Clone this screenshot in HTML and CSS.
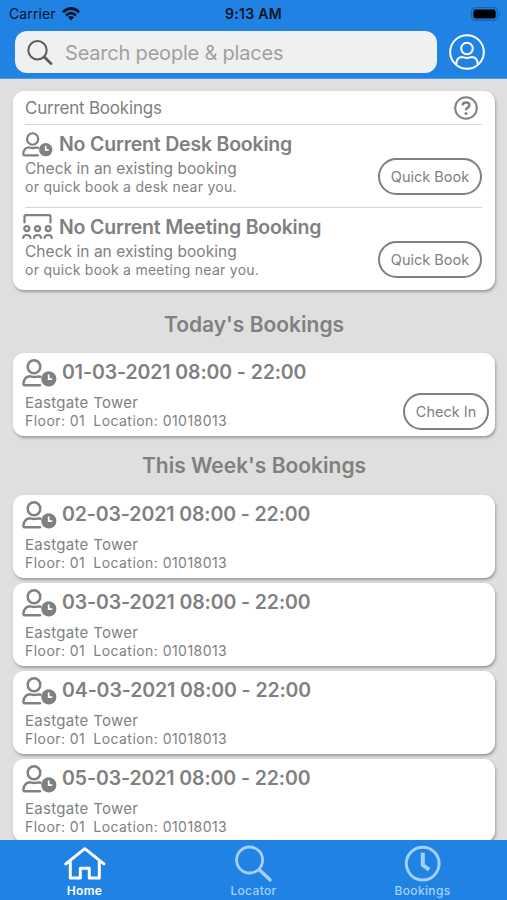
FILE: index.html
```html
<!DOCTYPE html>
<html lang="en">
<head>
<meta charset="utf-8">
<title>Bookings</title>
<link rel="stylesheet" href="styles.css">
</head>
<body>
<svg class="defs" width="0" height="0" aria-hidden="true">
  <symbol id="desk" viewBox="0 0 35 28">
    <g fill="none" stroke="currentColor" stroke-width="2.5" stroke-linecap="round" stroke-linejoin="round">
      <ellipse cx="12" cy="7.8" rx="6.3" ry="6.5"/>
      <path d="M18 26.2H2.5Q1.2 26.2 1.5 24Q2.3 18.2 6.8 17.4Q8.2 17.2 9.5 17.6Q12.3 18.4 15.2 17.6Q16.8 17.2 18.2 17.7"/>
    </g>
    <circle cx="26.8" cy="19.8" r="7.6" fill="currentColor"/>
    <path d="M26.7 15.5V20.1H30.2" fill="none" stroke="#fff" stroke-width="1.8"/>
  </symbol>
  <symbol id="meeting" viewBox="0 0 31 25">
    <g fill="none" stroke="currentColor" stroke-width="2.2" stroke-linecap="round" stroke-linejoin="round">
      <path d="M2.5 8.5V2.7Q2.5 1.2 4 1.2H27Q28.5 1.2 28.5 2.7V8.5"/>
      <circle cx="4.8" cy="14.6" r="2.5"/><circle cx="15.5" cy="14.6" r="2.5"/><circle cx="26.2" cy="14.6" r="2.5"/>
      <path d="M1.2 23.9Q1.4 21 4.8 21Q8.2 21 8.5 23.9M11.9 23.9Q12.2 21 15.5 21Q18.8 21 19.1 23.9M22.5 23.9Q22.8 21 26.2 21Q29.6 21 29.8 23.9"/>
    </g>
  </symbol>
</svg>
<div class="app">
  <header class="header">
    <div class="status">
      <div class="carrier"><span>Carrier</span>
        <svg width="18" height="14" viewBox="0 0 18 14"><g fill="none" stroke="#051426" stroke-width="2.7"><path d="M.9 5.2Q9-2.2 17.1 5.2M4 8.4Q9 4 14 8.4"/></g><path d="M5.9 10.3Q9 7.9 12.1 10.3L9 13.6Z" fill="#051426"/></svg>
      </div>
      <span class="time">9:13 AM</span>
      <svg class="battery" width="31" height="14" viewBox="0 0 31 14"><rect x=".6" y=".6" width="25.8" height="12.8" rx="4" fill="none" stroke="#1764ae" stroke-width="1.2"/><rect x="2.4" y="2.4" width="22.2" height="9.2" rx="2.3" fill="#000"/><path d="M28 4.7Q30 7 28 9.3Z" fill="#1764ae"/></svg>
    </div>
    <div class="search-row">
      <div class="search">
        <svg width="26" height="26" viewBox="0 0 26 26" fill="none" stroke="#5c5c5c"><circle cx="10.5" cy="10.3" r="9.2" stroke-width="2"/><path d="M17.2 17L24 23.5" stroke-width="2.8" stroke-linecap="round"/></svg>
        <span>Search people &amp; places</span>
      </div>
      <svg class="profile" width="36" height="36" viewBox="0 0 36 36" fill="none" stroke="#fff" stroke-width="2"><circle cx="18" cy="18" r="16.8"/><circle cx="18" cy="14.5" r="5.8"/><path d="M7.2 30.3Q7.5 23.3 12.8 22.9Q14 22.9 15.2 23.4Q18 24.4 20.8 23.4Q22 22.9 23.2 22.9Q28.5 23.3 28.8 30.3"/></svg>
    </div>
  </header>
  <main class="content">
    <section class="card current">
      <div class="current-head"><span>Current Bookings</span>
        <svg width="24" height="24" viewBox="0 0 24 24" fill="none" stroke="currentColor"><circle cx="12" cy="12" r="10.8" stroke-width="2"/><path d="M8.6 9.4Q8.7 6.5 12 6.5Q15.4 6.5 15.4 9.2Q15.4 10.8 13.7 11.7Q12 12.6 12 14.3" stroke-width="2.5"/><circle cx="12" cy="17.4" r="1.5" fill="currentColor" stroke="none"/></svg>
      </div>
      <div class="slot">
        <div class="slot-title"><svg class="icon-desk"><use href="#desk"/></svg><h3 class="t-desk">No Current Desk Booking</h3></div>
        <div class="slot-body"><div><p class="line-a">Check in an existing booking</p><p class="line-b">or quick book a desk near you.</p></div><button>Quick Book</button></div>
      </div>
      <div class="slot">
        <div class="slot-title"><svg class="icon-meeting"><use href="#meeting"/></svg><h3>No Current Meeting Booking</h3></div>
        <div class="slot-body"><div><p class="line-a">Check in an existing booking</p><p class="line-b">or quick book a meeting near you.</p></div><button>Quick Book</button></div>
      </div>
    </section>
    <h2 class="today">Today's Bookings</h2>
    <article class="card booking">
      <div class="booking-title"><svg><use href="#desk"/></svg><h3>01-03-2021 08:00 - 22:00</h3></div>
      <div class="booking-body"><div><p class="place">Eastgate Tower</p><p class="where"><span>Floor: 01</span><span>Location: 01018013</span></p></div><button class="check">Check In</button></div>
    </article>
    <h2 class="week">This Week's Bookings</h2>
    <div class="list">
      <article class="card booking">
        <div class="booking-title"><svg><use href="#desk"/></svg><h3>02-03-2021 08:00 - 22:00</h3></div>
        <div class="booking-body"><div><p class="place">Eastgate Tower</p><p class="where"><span>Floor: 01</span><span>Location: 01018013</span></p></div></div>
      </article>
      <article class="card booking">
        <div class="booking-title"><svg><use href="#desk"/></svg><h3>03-03-2021 08:00 - 22:00</h3></div>
        <div class="booking-body"><div><p class="place">Eastgate Tower</p><p class="where"><span>Floor: 01</span><span>Location: 01018013</span></p></div></div>
      </article>
      <article class="card booking">
        <div class="booking-title"><svg><use href="#desk"/></svg><h3>04-03-2021 08:00 - 22:00</h3></div>
        <div class="booking-body"><div><p class="place">Eastgate Tower</p><p class="where"><span>Floor: 01</span><span>Location: 01018013</span></p></div></div>
      </article>
      <article class="card booking">
        <div class="booking-title"><svg><use href="#desk"/></svg><h3>05-03-2021 08:00 - 22:00</h3></div>
        <div class="booking-body"><div><p class="place">Eastgate Tower</p><p class="where"><span>Floor: 01</span><span>Location: 01018013</span></p></div></div>
      </article>
    </div>
  </main>
  <nav class="tabs">
    <div class="tab active">
      <svg width="42" height="38" viewBox="0 0 42 38" fill="none" stroke="currentColor" stroke-width="3" stroke-linejoin="round" stroke-linecap="round"><path d="M1.8 18.8L20.8 3.7L39.8 18.8M6.3 17V33H16.3V23.3H25.3V33H35.3V17"/></svg>
      <span>Home</span>
    </div>
    <div class="tab">
      <svg width="42" height="38" viewBox="0 0 42 38" fill="none" stroke="currentColor" stroke-linecap="round"><circle cx="16.6" cy="15" r="13" stroke-width="2.8"/><path d="M26.5 25L37 34.8" stroke-width="3.5"/></svg>
      <span>Locator</span>
    </div>
    <div class="tab">
      <svg width="42" height="38" viewBox="0 0 42 38" fill="none" stroke="currentColor"><circle cx="20.7" cy="18.6" r="16.4" stroke-width="3"/><path d="M20.8 7.7V20L27.2 24.7" stroke-width="4"/></svg>
      <span>Bookings</span>
    </div>
  </nav>
</div>
</body>
</html>
```
FILE: styles.css
```css
* { box-sizing: border-box; }
body { margin: 0; font-family: Inter, sans-serif; color: #808080; }
h2, h3, p { margin: 0; white-space: nowrap; }
svg { display: block; flex: none; }
.defs { position: absolute; }
.app { height: 900px; display: flex; flex-direction: column; overflow: hidden; background: #dfdfdf; }
.header { height: 79px; flex: none; background: #2083e4; border-bottom: 1px solid #4e9be7; }
.status { height: 31px; display: grid; grid-template-columns: 1fr auto 1fr; align-items: center; padding: 0 5px 4px 9px; color: #051426; }
.carrier { display: flex; align-items: center; gap: 6px; font-size: 14px; letter-spacing: .1px; }
.time { font-size: 14px; font-weight: 600; letter-spacing: .3px; margin-right: 4px; }
.battery { justify-self: end; }
.search-row { display: flex; align-items: center; padding: 0 22px 0 15px; justify-content: space-between; }
.search { width: 422px; height: 42px; border-radius: 12px; background: #f0f0f0; display: flex; align-items: center; gap: 12px; padding: 1px 0 0 12px; font-size: 20px; letter-spacing: -.2px; color: #a0a0a0; }
.content { flex: 1; min-height: 0; overflow: hidden; padding: 12px 12px 0 13px; }
.card { background: #fff; border-radius: 11px; box-shadow: 1px 2px 3px rgba(0,0,0,.3); }
.current { height: 199px; padding: 0 13px 0 12px; }
.current-head { height: 34px; display: flex; align-items: center; justify-content: space-between; padding: 0 4px 0 0; font-size: 17px; letter-spacing: -.2px; border-bottom: 1px solid #d4d4d4; }
.slot { height: 82px; }
.slot + .slot { border-top: 1px solid #d4d4d4; }
.slot-title { height: 34px; display: flex; align-items: center; margin-left: -3px; }
h3 { font-size: 19.5px; font-weight: 600; line-height: 24px; letter-spacing: -.2px; }
.slot-title h3 { padding-top: 3px; }
.icon-desk { width: 31px; height: 25px; margin: 4px 6px 0 0; }
.icon-meeting { width: 31px; height: 25px; margin: 3px 6px 0 0; }
.slot-body { display: flex; justify-content: space-between; align-items: flex-start; }
.line-a { font-size: 15.5px; line-height: 18px; letter-spacing: .04px; padding-top: 1px; }
.line-b { font-size: 14px; line-height: 18px; letter-spacing: .26px; }
button { font: 400 14.5px Inter, sans-serif; color: #808080; background: #fff; border: 2px solid #808080; border-radius: 18.5px; width: 104px; height: 37px; padding: 0 0 1px; white-space: nowrap; flex: none; }
.slot-body button { margin-top: -1px; }
h2 { text-align: center; font-size: 21px; font-weight: 600; line-height: 28px; }
.today { padding: 21px 0 14px; }
.week { padding: 16px 0 15px; }
.booking { height: 83px; padding: 5px 6px 0 9px; }
.list { display: flex; flex-direction: column; gap: 5px; }
.booking-title { display: flex; height: 35px; }
.booking-title svg { width: 35px; height: 28px; margin: 1px 5px 0 0; }
.booking-title h3 { line-height: 28px; letter-spacing: -.1px; }
.booking-body { display: flex; justify-content: space-between; padding-left: 3px; }
.place { font-size: 15px; line-height: 18px; letter-spacing: .3px; padding-top: 1px; }
.where { font-size: 14px; line-height: 18px; letter-spacing: .45px; display: flex; gap: 8px; }
.check { width: 86px; }
.tabs { height: 60px; flex: none; display: grid; grid-template-columns: repeat(3, 1fr); background: #2083e4; color: #a5cfff; }
.tab { display: flex; flex-direction: column; align-items: center; padding-top: 5px; font-size: 12px; line-height: 16px; font-weight: 500; letter-spacing: .35px; }
.active { color: #fff; font-weight: 600; }
```
